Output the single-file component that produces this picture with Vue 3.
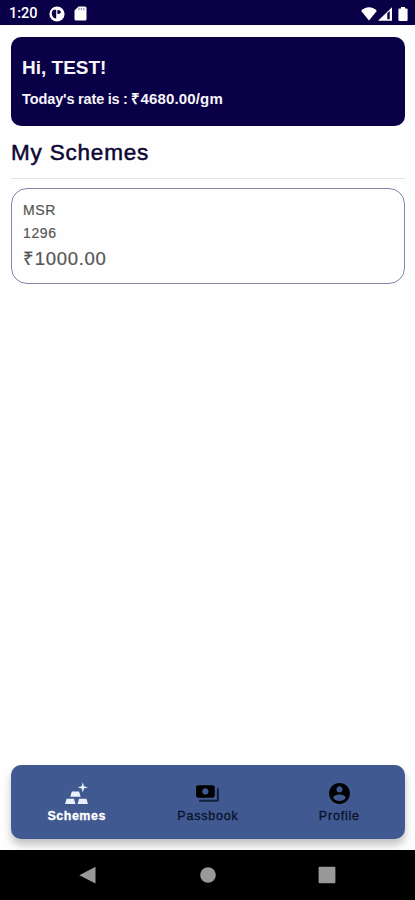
<template>
  <div class="screen">
    <header class="status-bar">
      <span class="clock">1:20</span>
      <svg class="app-icon" viewBox="0 0 16 16">
        <circle cx="8" cy="8" r="7.6" fill="#fff" />
        <path d="M4.600 3.800h2.600v8.800a5 5 0 0 1-2.600-8.800z" fill="#090047" />
        <path d="M8.700 4.400h1.200a1.500 1.500 0 0 1 0 3.200H8.700z" fill="#090047" stroke="#090047" stroke-width=".6" />
      </svg>
      <svg class="sd-icon" viewBox="0 0 13 15">
        <path d="M4.6.5H11a1.5 1.5 0 0 1 1.5 1.5v11a1.5 1.5 0 0 1-1.5 1.5H2A1.5 1.5 0 0 1 .5 13V4.6z" fill="#fff" />
        <path d="M5 2v2.200M7.400 2v2.200M9.800 2v2.200" stroke="#9994b8" stroke-width="1.3" />
      </svg>
      <svg class="wifi-icon" viewBox="0 0 16 14">
        <path d="M8 13.6.2 3.9C2.3 1.500 5 .3 8 .3s5.700 1.200 7.800 3.600z" fill="#fff" />
      </svg>
      <svg class="signal-icon" viewBox="0 0 14 14">
        <path d="M0 13.800 14 .2v13.600z" fill="#fff" />
        <path d="M9.300 6.200 11.700 4v8.300H9.300z" fill="#090047" />
      </svg>
      <svg class="battery-icon" viewBox="0 0 10 14">
        <path d="M3 0h4v1.500h1.600a1 1 0 0 1 1 1V13a1 1 0 0 1-1 1H1.400a1 1 0 0 1-1-1V2.500a1 1 0 0 1 1-1H3z" fill="#fff" />
      </svg>
    </header>

    <main class="content">
      <section class="welcome">
        <div class="greeting">Hi, {{ user }}!</div>
        <div class="rate">Today's rate is : <span class="rate-value">₹{{ rate }}/gm</span></div>
      </section>

      <h1 class="title">My Schemes</h1>

      <article v-for="scheme in schemes" :key="scheme.number" class="scheme">
        <div class="scheme-name">{{ scheme.name }}</div>
        <div class="scheme-number">{{ scheme.number }}</div>
        <div class="scheme-amount">₹{{ scheme.amount }}</div>
      </article>
    </main>

    <nav class="tabs">
      <button
        v-for="tab in tabs"
        :key="tab"
        class="tab"
        :class="{ active: tab === activeTab }"
        @click="activeTab = tab"
      >
        <svg v-if="tab === 'Schemes'" class="tab-icon" viewBox="0 0 24 24">
          <path d="M1 22l1.500-5h7l1.500 5zM13 22l1.500-5h7l1.500 5zM6 15l1.500-5h7l1.500 5zM23 6.050l-3.860 1.090L18.050 11l-1.090-3.860-3.860-1.090 3.860-1.090 1.090-3.860 1.090 3.860z" />
        </svg>
        <svg v-else-if="tab === 'Passbook'" class="tab-icon" viewBox="0 0 24 24">
          <path d="M19 14V6c0-1.100-.9-2-2-2H3c-1.100 0-2 .9-2 2v8c0 1.100.9 2 2 2h14c1.100 0 2-.9 2-2zm-9-1c-1.660 0-3-1.340-3-3s1.340-3 3-3 3 1.340 3 3-1.340 3-3 3z" />
          <path class="back-note" d="M23 7v11c0 1.100-.9 2-2 2H4v-2h17V7z" />
        </svg>
        <svg v-else class="tab-icon" viewBox="0 0 24 24">
          <path d="M12 2C6.480 2 2 6.480 2 12s4.480 10 10 10 10-4.480 10-10S17.520 2 12 2zm0 3c1.660 0 3 1.340 3 3s-1.340 3-3 3-3-1.340-3-3 1.340-3 3-3zm0 14.200c-2.500 0-4.710-1.280-6-3.220.03-1.990 4-3.080 6-3.080 1.990 0 5.970 1.090 6 3.080-1.290 1.940-3.500 3.220-6 3.220z" />
        </svg>
        <span class="tab-label">{{ tab }}</span>
      </button>
    </nav>

    <footer class="system-nav">
      <svg viewBox="0 0 18 18"><path d="M16.500.8v16.800L.3 9.200z" /></svg>
      <svg viewBox="0 0 18 18"><circle cx="9" cy="9" r="7.800" /></svg>
      <svg viewBox="0 0 18 18"><rect x=".6" y=".8" width="16.800" height="16.400" rx="1" /></svg>
    </footer>
  </div>
</template>

<script setup>
import { ref } from 'vue';

const user = 'TEST';
const rate = '4680.00';
const schemes = [{ name: 'MSR', number: '1296', amount: '1000.00' }];
const tabs = ['Schemes', 'Passbook', 'Profile'];
const activeTab = ref('Schemes');
</script>

<style>
body {
  background: #fff;
}
</style>

<style scoped>
.screen {
  height: 900px;
  display: flex;
  flex-direction: column;
  overflow: hidden;
  background: #fefefe;
  font-family: "Liberation Sans", Arial, sans-serif;
}

.status-bar {
  height: 25px;
  flex: none;
  display: flex;
  align-items: center;
  box-sizing: border-box;
  padding: 2px 7px 0 9px;
  background: #090047;
}

.clock {
  width: 40px;
  color: #fff;
  font: 500 14.5px/18px Roboto, sans-serif;
}

.app-icon {
  width: 16px;
  height: 16px;
}

.sd-icon {
  width: 13px;
  height: 15px;
  margin-left: 9px;
}

.wifi-icon {
  width: 16px;
  height: 14px;
  margin-left: auto;
}

.signal-icon {
  width: 14px;
  height: 14px;
  margin-left: 1px;
}

.battery-icon {
  width: 10px;
  height: 14px;
  margin-left: 6px;
}

.content {
  flex: 1;
  padding: 12px 10px 0 11px;
}

.welcome {
  height: 89px;
  box-sizing: border-box;
  padding: 18px 11px 0;
  border-radius: 10px;
  background: #090047;
  color: #f6f5fa;
  font-weight: 700;
}

.greeting {
  font-size: 19px;
  line-height: 26px;
}

.rate {
  margin-top: 8px;
  font-size: 14.5px;
  line-height: 20px;
  letter-spacing: -0.1px;
  word-spacing: -0.4px;
}

.rate-value {
  font-size: 15px;
  letter-spacing: 0.15px;
}

.title {
  height: 53px;
  box-sizing: border-box;
  margin: 0 0 9px;
  padding-top: 12px;
  border-bottom: 1px solid #e3e5ea;
  color: #0c0634;
  font-size: 22.5px;
  font-weight: 400;
  line-height: 30px;
  letter-spacing: 0.8px;
  -webkit-text-stroke: 0.5px #0c0634;
}

.scheme {
  height: 96px;
  box-sizing: border-box;
  padding: 11px 10px 0 11px;
  border: 1px solid #8884aa;
  border-radius: 16px;
  color: #555;
  -webkit-text-stroke: 0.2px #555;
}

.scheme-name,
.scheme-number {
  height: 23px;
  font-size: 14px;
  line-height: 21px;
  letter-spacing: 0.6px;
}

.scheme-amount {
  font-size: 18.5px;
  line-height: 26px;
  letter-spacing: 0.7px;
}

.tabs {
  height: 74px;
  flex: none;
  display: flex;
  margin: 0 10px 11px 11px;
  border-radius: 10px;
  background: #405991;
  box-shadow: 0 6px 8px rgba(0, 0, 0, 0.24);
}

.tab {
  flex: 1;
  display: flex;
  flex-direction: column;
  align-items: center;
  padding: 16px 0 0;
  border: none;
  background: none;
  color: #0a1228;
  font-family: inherit;
  cursor: pointer;
}

.tab-icon {
  width: 25px;
  height: 25px;
  fill: #000;
}

.back-note {
  fill: #14203f;
}

.tab-label {
  margin-top: 2px;
  font-size: 12.5px;
  line-height: 16px;
  letter-spacing: 0.8px;
  -webkit-text-stroke: 0.3px currentColor;
}

.active {
  color: #fff;
  font-weight: 700;
}

.active .tab-label {
  letter-spacing: 0.5px;
}

.active .tab-icon {
  fill: #e9f0fb;
}

.system-nav {
  height: 50px;
  flex: none;
  display: flex;
  justify-content: space-between;
  align-items: center;
  box-sizing: border-box;
  padding: 0 79px;
  background: #000;
}

.system-nav svg {
  width: 18px;
  height: 18px;
  fill: #999;
}
</style>
